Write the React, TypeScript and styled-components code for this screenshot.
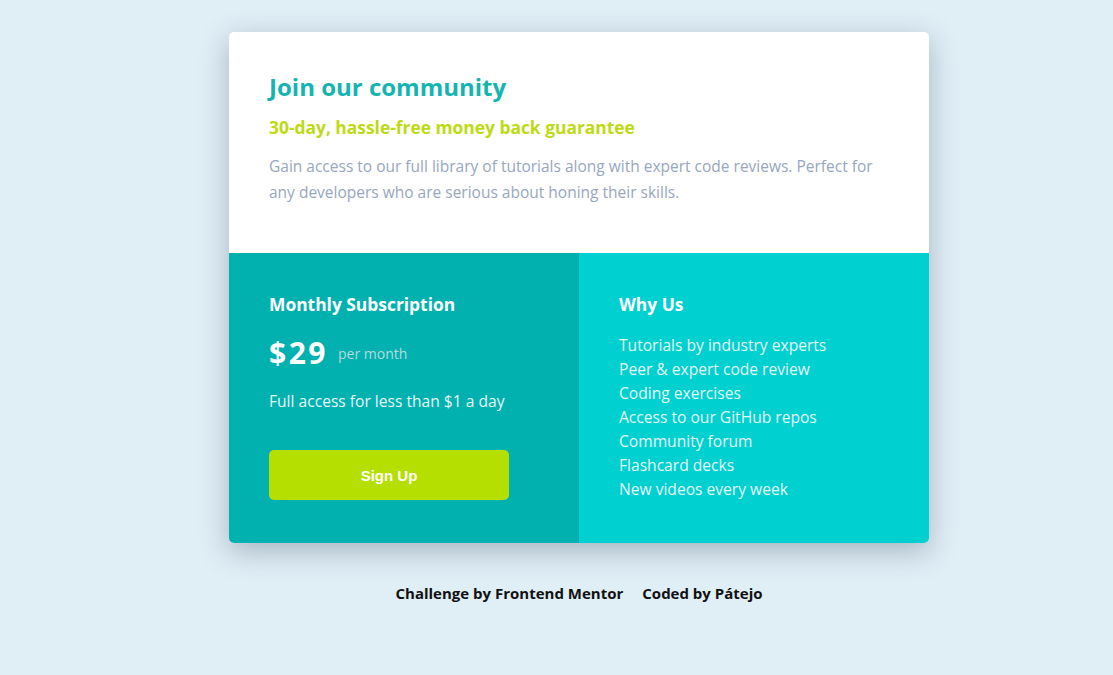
import React from "react";
import styled, { createGlobalStyle } from "styled-components";

const Global = createGlobalStyle`
  html, body { margin: 0; padding: 0; }
  body {
    background: #e0eef6;
    font-family: "Open Sans", "Noto Sans", sans-serif;
    -webkit-font-smoothing: antialiased;
  }
`;

const Page = styled.main`
  min-height: 675px;
  display: flex;
  flex-direction: column;
  align-items: center;
  padding: 32px 0 0 45px;
  box-sizing: border-box;
`;

const Card = styled.section`
  width: 700px;
  border-radius: 5px;
  overflow: hidden;
  background: #fff;
  box-shadow: 0 8px 28px rgba(55, 75, 95, 0.35);
`;

const Top = styled.div`
  padding: 40px 40px 0;
  height: 221px;
  box-sizing: border-box;
`;

const Title = styled.h1`
  margin: 0;
  font-size: 24px;
  font-weight: 700;
  color: #14b5b1;
  line-height: 30px;
`;

const Guarantee = styled.h2`
  margin: 12px 0 0;
  font-size: 17.4px;
  font-weight: 700;
  color: #bcdb13;
  line-height: 26px;
`;

const Desc = styled.p`
  margin: 13px 0 0;
  font-size: 15.5px;
  line-height: 26px;
  color: #98a6c0;
`;

const Bottom = styled.div`
  display: grid;
  grid-template-columns: 350px 350px;
  height: 290px;
`;

const Col = styled.div<{ $bg: string }>`
  background: ${(p) => p.$bg};
  padding: 40px 40px 0;
  box-sizing: border-box;
  color: #fff;
`;

const ColTitle = styled.h3`
  margin: 0;
  font-size: 17.4px;
  font-weight: 700;
  line-height: 22px;
`;

const PriceRow = styled.div`
  display: flex;
  align-items: center;
  gap: 10px;
  margin-top: 19px;
`;

const Price = styled.span`
  font-size: 30px;
  letter-spacing: 2.5px;
  font-weight: 700;
  line-height: 38px;
`;

const Per = styled.span`
  font-size: 14px;
  color: #b4dcdc;
`;

const Note = styled.p`
  margin: 18px 0 0;
  font-size: 15.6px;
  line-height: 22px;
  color: #e6f6f6;
`;

const Button = styled.button`
  display: block;
  margin-top: 38px;
  width: 240px;
  height: 50px;
  border: none;
  border-radius: 5px;
  background: #b4df00;
  color: #fff;
  font-family: "Liberation Sans", Arial, sans-serif;
  font-weight: 700;
  font-size: 15px;
  cursor: pointer;
`;

const List = styled.ul`
  list-style: none;
  margin: 18px 0 0;
  padding: 0;
`;

const Item = styled.li`
  font-size: 15.6px;
  line-height: 24px;
  color: #e3f7f7;
`;

const Footer = styled.footer`
  margin-top: 40px;
  display: flex;
  gap: 19px;
  font-size: 15px;
  font-weight: 700;
  color: #111;
  line-height: 20px;
`;

const features = [
  "Tutorials by industry experts",
  "Peer & expert code review",
  "Coding exercises",
  "Access to our GitHub repos",
  "Community forum",
  "Flashcard decks",
  "New videos every week",
];

export default function App() {
  return (
    <>
      <Global />
      <Page>
        <Card>
          <Top>
            <Title>Join our community</Title>
            <Guarantee>30-day, hassle-free money back guarantee</Guarantee>
            <Desc>
              Gain access to our full library of tutorials along with expert code reviews. Perfect
              for any developers who are serious about honing their skills.
            </Desc>
          </Top>
          <Bottom>
            <Col $bg="#00b1b0">
              <ColTitle>Monthly Subscription</ColTitle>
              <PriceRow>
                <Price>$29</Price>
                <Per>per month</Per>
              </PriceRow>
              <Note>Full access for less than $1 a day</Note>
              <Button>Sign Up</Button>
            </Col>
            <Col $bg="#00d0cf">
              <ColTitle>Why Us</ColTitle>
              <List>
                {features.map((f) => (
                  <Item key={f}>{f}</Item>
                ))}
              </List>
            </Col>
          </Bottom>
        </Card>
        <Footer>
          <span>Challenge by Frontend Mentor</span>
          <span>Coded by Pátejo</span>
        </Footer>
      </Page>
    </>
  );
}
